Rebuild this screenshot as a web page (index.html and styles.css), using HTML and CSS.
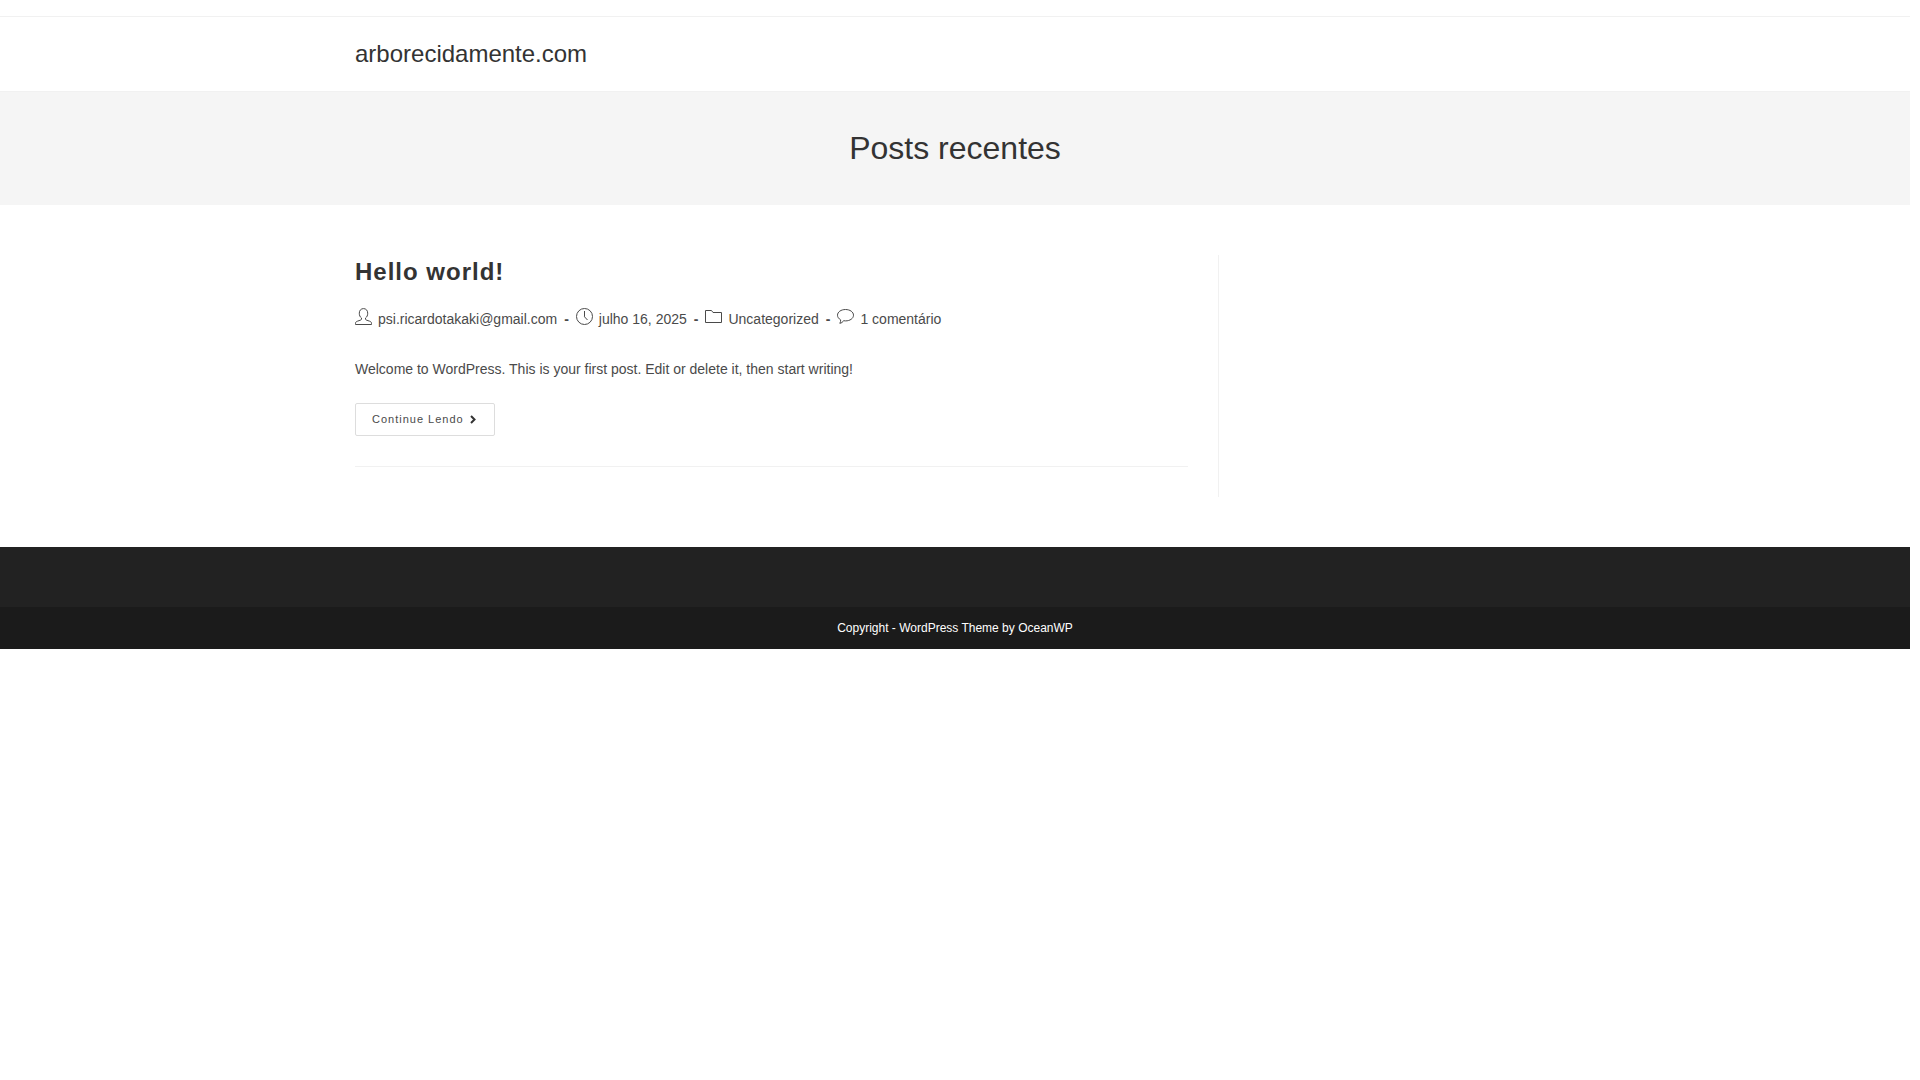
FILE: index.html
```
<!DOCTYPE html>
<html lang="pt-BR">
<head>
    <meta charset="UTF-8">
    <meta name="viewport" content="width=device-width, initial-scale=1.0">
    <title>arborecidamente.com</title>
    <link rel="stylesheet" href="styles.css">
</head>
<body>
    <div class="top-bar"></div>
    <header class="site-header">
        <div class="container">
            <a class="site-title" href="#">arborecidamente.com</a>
        </div>
    </header>
    <div class="page-header">
        <h1 class="page-title">Posts recentes</h1>
    </div>
    <main class="container main">
        <div class="content">
            <article class="post">
                <h2 class="post-title"><a href="#">Hello world!</a></h2>
                <ul class="meta">
                    <li>
                        <svg class="icon" viewBox="0 0 17 17" aria-hidden="true"><path d="M6.500 11V10C5 9 4.300 7.400 4.300 5.200 4.300 2.400 6 .6 8.500.6s4.200 1.800 4.200 4.600c0 2.200-.7 3.800-2.200 4.800v1c0 .5.300.8.700 1l3.400 1.200c1.300.4 1.900 1.100 1.900 2.100v1.200H.5v-1.200c0-1 .6-1.700 1.900-2.100l3.400-1.200c.4-.2.700-.5.700-1z"/></svg>
                        <a href="#">psi.ricardotakaki@gmail.com</a>
                    </li>
                    <li>
                        <svg class="icon" viewBox="0 0 17 17" aria-hidden="true"><circle cx="8.500" cy="8.500" r="8"/><path d="M8.500 3v5.800l3 3.200"/></svg>
                        <span>julho 16, 2025</span>
                    </li>
                    <li>
                        <svg class="icon" viewBox="0 0 17 17" aria-hidden="true"><path d="M.5 14.500v-12h6l1.500 2h8.500v10z"/></svg>
                        <a href="#">Uncategorized</a>
                    </li>
                    <li>
                        <svg class="icon" viewBox="0 0 17 17" aria-hidden="true"><path d="M8.500 1.500c4.500 0 8 2.500 8 5.700s-3.500 5.700-8 5.700c-.7 0-1.400-.1-2-.2-.7 1.400-1.800 2.300-3.700 2.600.7-.9 1-2.200.8-3.500C1.700 10.700.5 9.100.5 7.200c0-3.200 3.500-5.700 8-5.700z"/></svg>
                        <a href="#">1 comentário</a>
                    </li>
                </ul>
                <p class="summary">Welcome to WordPress. This is your first post. Edit or delete it, then start writing!</p>
                <a class="read-more" href="#">Continue Lendo
                    <svg class="arrow" viewBox="0 0 8 9" aria-hidden="true"><path d="M1 1l3.500 3.500L1 8"/></svg>
                </a>
            </article>
        </div>
    </main>
    <footer>
        <div class="footer-widgets"></div>
        <div class="footer-bottom">Copyright - WordPress Theme by OceanWP</div>
    </footer>
</body>
</html>
```
FILE: styles.css
```
* {
    box-sizing: border-box;
    margin: 0;
    padding: 0;
}
body {
    font-family: "Liberation Sans", Arial, sans-serif;
    font-size: 14px;
    line-height: 26px;
    color: #4a4a4a;
    background: #fff;
    margin-right: 10px;
}
a {
    color: inherit;
    text-decoration: none;
}
a:hover {
    color: #13aff0;
}
.container {
    width: 1200px;
    max-width: 90%;
    margin: 0 auto;
}

/* Header */
.top-bar {
    height: 17px;
    border-bottom: 1px solid #f1f1f1;
}
.site-header {
    border-bottom: 1px solid #f1f1f1;
}
.site-title {
    display: block;
    font-size: 24px;
    line-height: 74px;
    color: #333;
}
.page-header {
    padding: 34px 0;
    background: #f5f5f5;
    text-align: center;
}
.page-title {
    font-size: 32px;
    font-weight: 400;
    line-height: 45px;
    color: #333;
}

/* Posts */
.main {
    padding: 50px 0;
}
.content {
    width: 72%;
    padding-right: 30px;
    border-right: 1px solid #f1f1f1;
    padding-bottom: 30px;
}
.post {
    padding-bottom: 30px;
    border-bottom: 1px solid #f1f1f1;
}
.post-title {
    font-size: 24px;
    line-height: 34px;
    letter-spacing: 1px;
    color: #333;
    margin-bottom: 17px;
}
.meta {
    display: flex;
    flex-wrap: wrap;
    list-style: none;
    margin-bottom: 24px;
}
.meta li {
    display: flex;
}
.meta li:not(:last-child)::after {
    content: "-";
    font-weight: 700;
    padding: 0 7px;
}
.icon {
    width: 17px;
    height: 17px;
    margin: 2px 6px 0 0;
    fill: none;
    stroke: #4a4a4a;
    stroke-width: 1;
}
.summary {
    margin-bottom: 21px;
}
.read-more {
    display: inline-flex;
    align-items: center;
    gap: 6px;
    padding: 0 16px;
    border: 1px solid #ddd;
    border-radius: 2px;
    font-size: 11px;
    line-height: 31px;
    letter-spacing: 1px;
    vertical-align: top;
}
.arrow {
    width: 8px;
    height: 9px;
    fill: none;
    stroke: #333;
    stroke-width: 2;
}

/* Footer */
.footer-widgets {
    height: 60px;
    background: #222;
}
.footer-bottom {
    padding: 15px;
    background: #1b1b1b;
    color: #fff;
    font-size: 12px;
    line-height: 12px;
    text-align: center;
}
```
